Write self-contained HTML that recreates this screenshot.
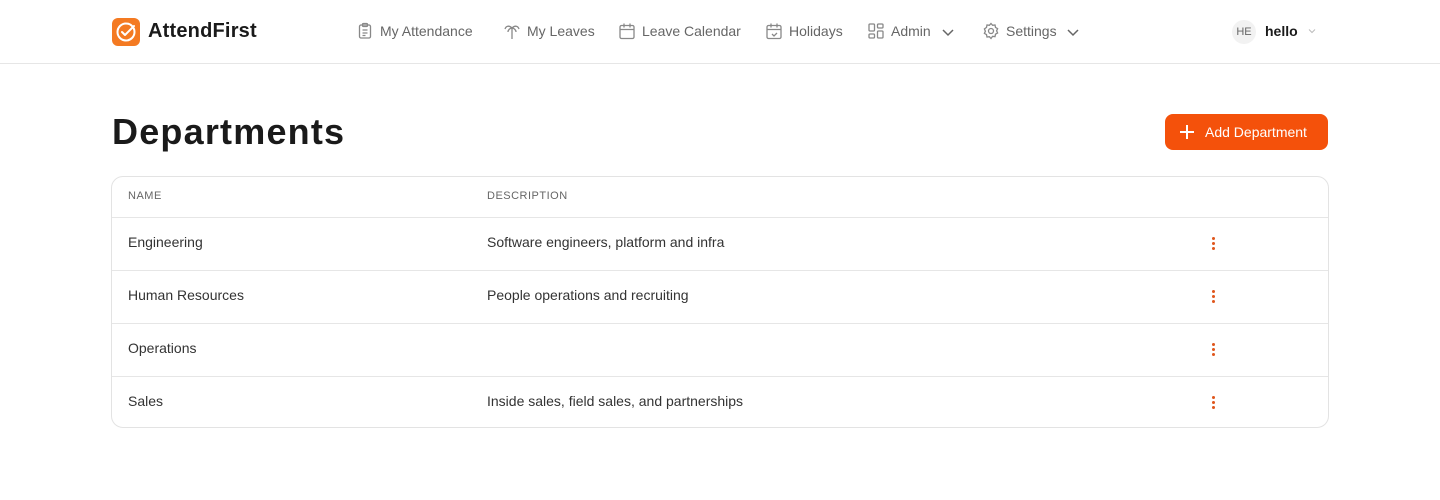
<!DOCTYPE html>
<html><head><meta charset="utf-8"><style>
*{box-sizing:border-box;margin:0;padding:0}
body{width:1440px;height:500px;background:#fff;font-family:"Liberation Sans",sans-serif;color:#222;position:relative;overflow:hidden}
.hdr{position:absolute;left:0;top:0;width:1440px;height:64px;border-bottom:1px solid #e6e6e6}
.logo{position:absolute;left:112px;top:18px;width:28px;height:28px;background:#f47a22;border-radius:6px}
.brand{position:absolute;left:148px;top:20px;font-size:20px;font-weight:bold;color:#1a1a1a;letter-spacing:0.2px}
.nav{position:absolute;top:23px;font-size:14px;color:#666;white-space:nowrap}
.nav svg{position:absolute;left:-24px;top:-1px}
.av{position:absolute;left:1232px;top:20px;width:24px;height:24px;border-radius:50%;background:#f2f2f2;font-size:11px;color:#666;text-align:center;line-height:24px}
h1{position:absolute;left:112px;top:111px;font-size:36px;font-weight:bold;color:#1a1a1a;letter-spacing:1.2px}
.btn{position:absolute;left:1165px;top:114px;width:163px;height:36px;background:#f4510b;border-radius:8px;color:#fff;font-size:14px;line-height:36px;padding-left:40px}
.btn:before{content:"";position:absolute;left:15px;top:17px;width:14px;height:1.6px;background:#fff}
.btn:after{content:"";position:absolute;left:21.2px;top:11px;width:1.6px;height:14px;background:#fff}
.tbl{position:absolute;left:111px;top:176px;width:1218px;height:252px;border:1px solid #e3e3e3;border-radius:12px}
.row{position:absolute;left:0;width:1216px;border-top:1px solid #e6e6e6;height:53px;font-size:14px;color:#333}
.row span{position:absolute;top:16px}
.th{position:absolute;top:13px;font-size:11px;color:#666;letter-spacing:0.5px}
.dots{position:absolute;left:1100px;top:19px;width:3px}
.dots i{display:block;width:3px;height:3px;background:#e0561c;border-radius:50%;margin-bottom:2px}
</style></head><body>
<div class="hdr">
<div class="logo"><svg width="28" height="28" viewBox="0 0 28 28"><circle cx="14" cy="14" r="8.5" fill="none" stroke="#fff" stroke-width="2"/><path d="M10 14l3 3 9-9" fill="none" stroke="#fff" stroke-width="2" stroke-linecap="round" stroke-linejoin="round"/></svg></div>
<div class="brand">AttendFirst</div>
<div class="nav" style="left:380px"><svg width="18" height="18" viewBox="0 0 18 18" fill="none" stroke="#888" stroke-width="1.3"><rect x="3.5" y="3" width="11" height="13" rx="1.5"/><rect x="6.5" y="1.5" width="5" height="3" rx="1"/><path d="M6.5 8h5M6.5 11h5M6.5 13.5h3"/></svg>My Attendance</div>
<div class="nav" style="left:527px"><svg width="18" height="18" viewBox="0 0 18 18" fill="none" stroke="#888" stroke-width="1.3"><path d="M9 6v11M9 6C6 3 3 4 2 7M9 6c3-3 6-2 7 1M9 6C7 6 5 8 5 10M9 6c2 0 4 2 4 4"/></svg>My Leaves</div>
<div class="nav" style="left:642px"><svg width="18" height="18" viewBox="0 0 18 18" fill="none" stroke="#888" stroke-width="1.3"><rect x="2" y="3.5" width="14" height="13" rx="1.5"/><path d="M2 7.5h14M6 1.5v4M12 1.5v4"/></svg>Leave Calendar</div>
<div class="nav" style="left:789px"><svg width="18" height="18" viewBox="0 0 18 18" fill="none" stroke="#888" stroke-width="1.3"><rect x="2" y="3.5" width="14" height="13" rx="1.5"/><path d="M2 7.5h14M6 1.5v4M12 1.5v4M7 12l2 2 3-3"/></svg>Holidays</div>
<div class="nav" style="left:891px"><svg width="18" height="18" viewBox="0 0 18 18" fill="none" stroke="#888" stroke-width="1.3"><rect x="2" y="2" width="5.5" height="7" rx="1"/><rect x="10.5" y="2" width="5.5" height="4" rx="1"/><rect x="2" y="12" width="5.5" height="4" rx="1"/><rect x="10.5" y="9" width="5.5" height="7" rx="1"/></svg>Admin <svg style="position:static;vertical-align:-3px;margin-left:6px" width="14" height="14" viewBox="0 0 14 14" fill="none" stroke="#666" stroke-width="1.5"><path d="M2 5l5 5 5-5"/></svg></div>
<div class="nav" style="left:1006px"><svg width="18" height="18" viewBox="0 0 18 18" fill="none" stroke="#888" stroke-width="1.3"><circle cx="9" cy="9" r="2.5"/><path d="M9 1.5l1.6 1.8 2.4-.3.5 2.4 2.1 1.2-1 2.2 1 2.2-2.1 1.2-.5 2.4-2.4-.3L9 16.5l-1.6-1.8-2.4.3-.5-2.4-2.1-1.2 1-2.2-1-2.2L4.5 5.4 5 3l2.4.3z"/></svg>Settings <svg style="position:static;vertical-align:-3px;margin-left:6px" width="14" height="14" viewBox="0 0 14 14" fill="none" stroke="#666" stroke-width="1.5"><path d="M2 5l5 5 5-5"/></svg></div>
<div class="av">HE</div>
<div class="nav" style="left:1265px;color:#1a1a1a;font-weight:bold">hello <svg style="position:static;vertical-align:1px;margin-left:6px" width="8" height="8" viewBox="0 0 8 8" fill="none" stroke="#bbb" stroke-width="1"><path d="M1 2.5l3 3 3-3"/></svg></div>
</div>
<h1>Departments</h1>
<div class="btn">Add Department</div>
<div class="tbl">
<div class="th" style="left:16px">NAME</div><div class="th" style="left:375px">DESCRIPTION</div>
<div class="row" style="top:40px"><span style="left:16px">Engineering</span><span style="left:375px">Software engineers, platform and infra</span><div class="dots"><i></i><i></i><i></i></div></div>
<div class="row" style="top:93px"><span style="left:16px">Human Resources</span><span style="left:375px">People operations and recruiting</span><div class="dots"><i></i><i></i><i></i></div></div>
<div class="row" style="top:146px"><span style="left:16px">Operations</span><div class="dots"><i></i><i></i><i></i></div></div>
<div class="row" style="top:199px"><span style="left:16px">Sales</span><span style="left:375px">Inside sales, field sales, and partnerships</span><div class="dots"><i></i><i></i><i></i></div></div>
</div>
</body></html>
